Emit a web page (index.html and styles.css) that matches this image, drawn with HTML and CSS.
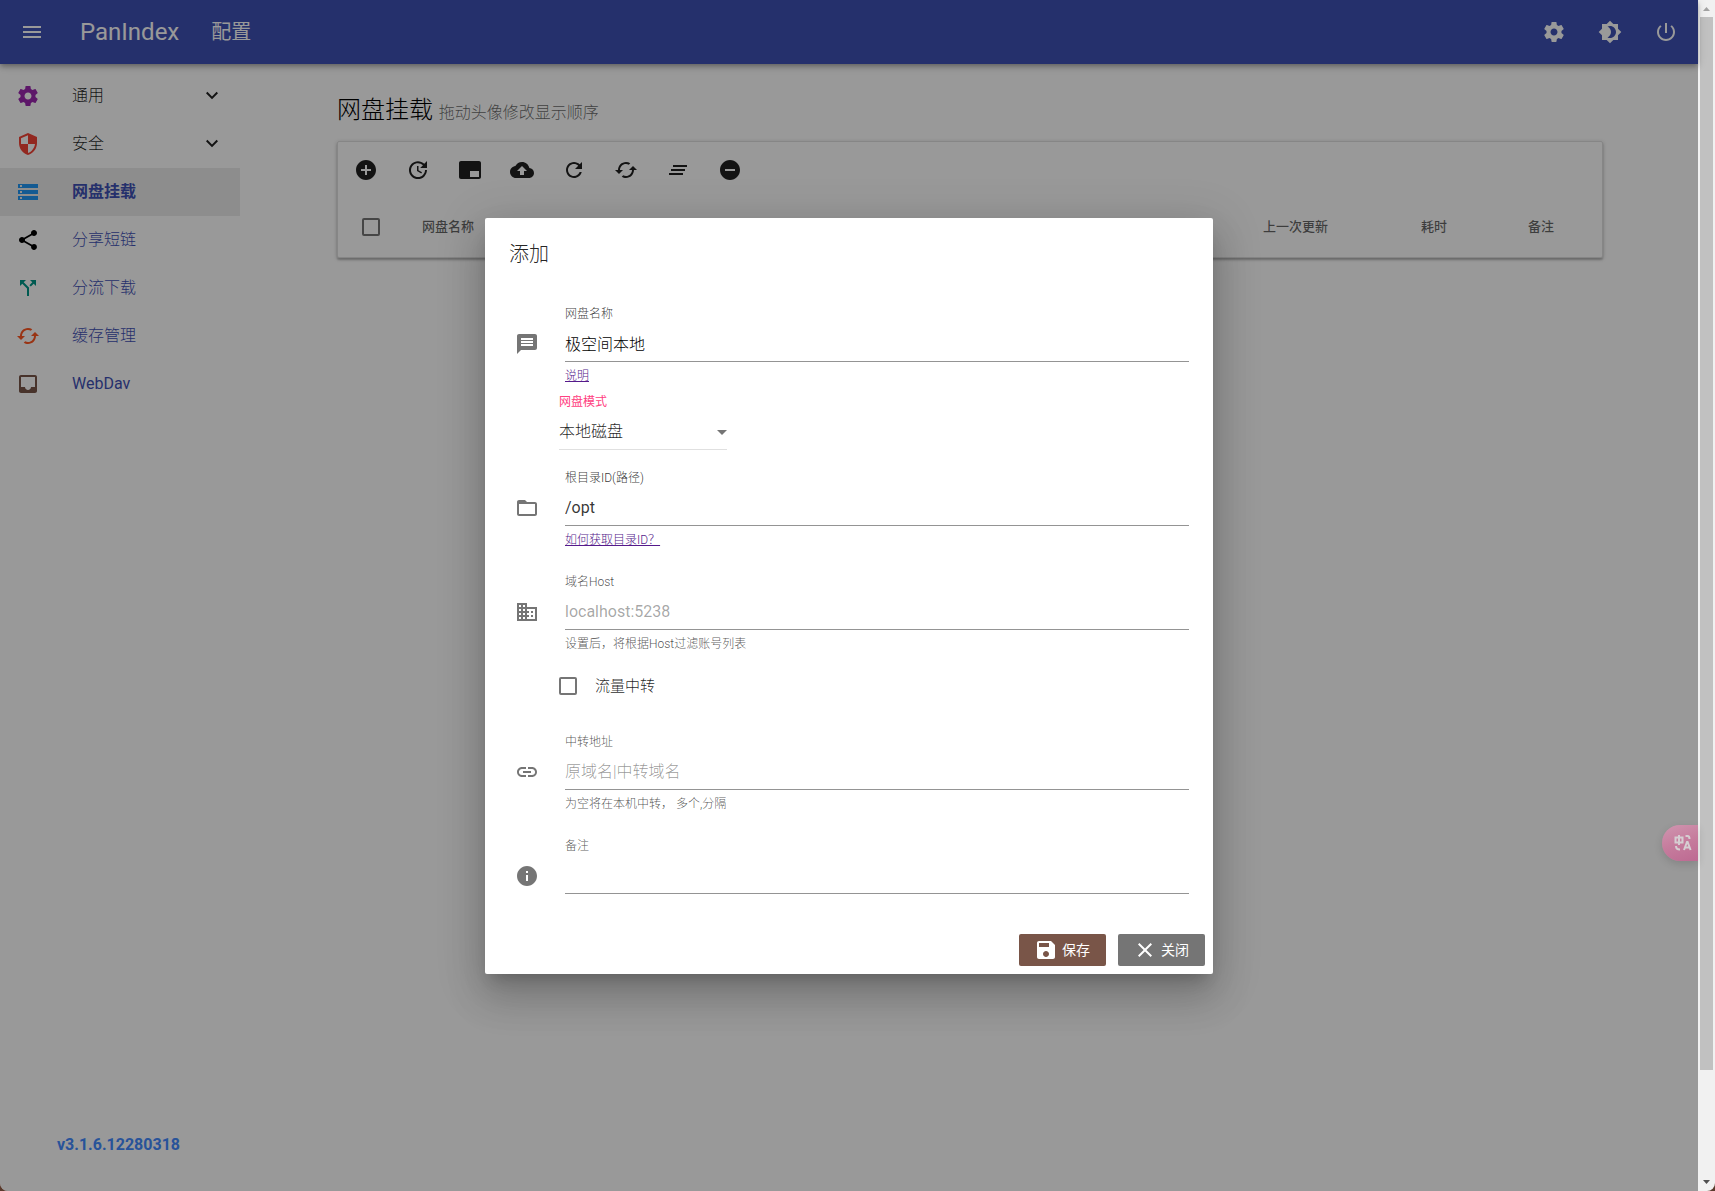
FILE: index.html
```html
<!DOCTYPE html>
<html lang="zh-CN">
<head>
<meta charset="utf-8">
<meta name="viewport" content="width=device-width, initial-scale=1">
<title>PanIndex 配置</title>
<link rel="stylesheet" href="styles.css">
</head>
<body>
<svg class="sprite" aria-hidden="true">
  <symbol id="i-menu" viewBox="0 0 24 24"><path d="M3 18h18v-2H3v2zm0-5h18v-2H3v2zm0-7v2h18V6H3z"/></symbol>
  <symbol id="i-settings" viewBox="0 0 24 24"><path d="M19.43 12.98c.04-.32.07-.64.07-.98s-.03-.66-.07-.98l2.11-1.65c.19-.15.24-.42.12-.64l-2-3.46c-.12-.22-.39-.3-.61-.22l-2.49 1c-.52-.4-1.08-.73-1.69-.98l-.38-2.65C14.46 2.18 14.25 2 14 2h-4c-.25 0-.46.18-.49.42l-.38 2.65c-.61.25-1.17.59-1.69.98l-2.49-1c-.23-.09-.49 0-.61.22l-2 3.46c-.13.22-.07.49.12.64l2.11 1.65c-.04.32-.07.65-.07.98s.03.66.07.98l-2.11 1.65c-.19.15-.24.42-.12.64l2 3.46c.12.22.39.3.61.22l2.49-1c.52.4 1.08.73 1.69.98l.38 2.65c.03.24.24.42.49.42h4c.25 0 .46-.18.49-.42l.38-2.65c.61-.25 1.17-.59 1.69-.98l2.49 1c.23.09.49 0 .61-.22l2-3.46c.12-.22.07-.49-.12-.64l-2.11-1.65zM12 15.5c-1.93 0-3.5-1.57-3.5-3.5s1.57-3.5 3.5-3.5 3.5 1.57 3.5 3.5-1.57 3.5-3.5 3.5z"/></symbol>
  <symbol id="i-brightness" viewBox="0 0 24 24"><path d="M20 8.69V4h-4.69L12 .69 8.69 4H4v4.69L.69 12 4 15.31V20h4.69L12 23.31 15.31 20H20v-4.69L23.31 12 20 8.69zM12 18c-.89 0-1.74-.2-2.5-.55C11.56 16.5 13 14.42 13 12s-1.44-4.5-3.5-5.45C10.26 6.2 11.11 6 12 6c3.31 0 6 2.69 6 6s-2.69 6-6 6z"/></symbol>
  <symbol id="i-power" viewBox="0 0 24 24"><path d="M13 3h-2v10h2V3zm4.83 2.17l-1.42 1.42C17.99 7.86 19 9.81 19 12c0 3.87-3.13 7-7 7s-7-3.13-7-7c0-2.19 1.01-4.14 2.58-5.42L6.17 5.17C4.23 6.82 3 9.26 3 12c0 4.97 4.03 9 9 9s9-4.03 9-9c0-2.74-1.23-5.18-3.17-6.83z"/></symbol>
  <symbol id="i-security" viewBox="0 0 24 24"><path d="M12 1L3 5v6c0 5.55 3.84 10.74 9 12 5.16-1.26 9-6.45 9-12V5l-9-4zm0 10.99h7c-.53 4.12-3.28 7.79-7 8.94V12H5V6.3l7-3.11v8.8z"/></symbol>
  <symbol id="i-storage" viewBox="0 0 24 24"><path d="M2 20h20v-4H2v4zm2-3h2v2H4v-2zM2 4v4h20V4H2zm4 3H4V5h2v2zm-4 7h20v-4H2v4zm2-3h2v2H4v-2z"/></symbol>
  <symbol id="i-share" viewBox="0 0 24 24"><path d="M18 16.08c-.76 0-1.44.3-1.96.77L8.91 12.7c.05-.23.09-.46.09-.7s-.04-.47-.09-.7l7.05-4.11c.54.5 1.25.81 2.04.81 1.66 0 3-1.34 3-3s-1.34-3-3-3-3 1.34-3 3c0 .24.04.47.09.7L8.04 9.81C7.5 9.31 6.79 9 6 9c-1.66 0-3 1.34-3 3s1.34 3 3 3c.79 0 1.5-.31 2.04-.81l7.12 4.16c-.05.21-.08.43-.08.65 0 1.61 1.31 2.92 2.92 2.92 1.61 0 2.92-1.31 2.92-2.92s-1.31-2.92-2.92-2.92z"/></symbol>
  <symbol id="i-split" viewBox="0 0 24 24"><path d="M14 4l2.29 2.29-2.88 2.88 1.42 1.42 2.88-2.88L20 10V4zm-4 0H4v6l2.29-2.29 4.71 4.7V20h2v-8.41l-5.29-5.3z"/></symbol>
  <symbol id="i-cached" viewBox="0 0 24 24"><path d="M19 8l-4 4h3c0 3.31-2.69 6-6 6-1.01 0-1.97-.25-2.8-.7l-1.46 1.46C8.97 19.54 10.43 20 12 20c4.42 0 8-3.58 8-8h3l-4-4zM6 12c0-3.31 2.69-6 6-6 1.01 0 1.97.25 2.8.7l1.46-1.46C15.03 4.46 13.57 4 12 4c-4.42 0-8 3.58-8 8H1l4 4 4-4H6z"/></symbol>
  <symbol id="i-inbox" viewBox="0 0 24 24"><path d="M19 3H4.99c-1.11 0-1.98.89-1.98 2L3 19c0 1.1.88 2 1.99 2H19c1.1 0 2-.9 2-2V5c0-1.11-.9-2-2-2zm0 12h-4c0 1.66-1.35 3-3 3s-3-1.34-3-3H4.99V5H19v10z"/></symbol>
  <symbol id="i-expand" viewBox="0 0 24 24"><path d="M7.41 7.84L12 12.42l4.59-4.58L18 9.25l-6 6-6-6z"/></symbol>
  <symbol id="i-add" viewBox="0 0 24 24"><path d="M12 2C6.48 2 2 6.48 2 12s4.48 10 10 10 10-4.48 10-10S17.52 2 12 2zm5 11h-4v4h-2v-4H7v-2h4V7h2v4h4v2z"/></symbol>
  <symbol id="i-remove" viewBox="0 0 24 24"><path d="M12 2C6.48 2 2 6.48 2 12s4.48 10 10 10 10-4.48 10-10S17.52 2 12 2zm5 11H7v-2h10v2z"/></symbol>
  <symbol id="i-update" viewBox="0 0 24 24"><path d="M21 10.12h-6.78l2.74-2.82c-2.73-2.7-7.15-2.8-9.88-.1-2.73 2.71-2.73 7.08 0 9.79s7.15 2.71 9.88 0C18.32 15.65 19 14.08 19 12.1h2c0 1.98-.88 4.55-2.64 6.29-3.51 3.48-9.21 3.48-12.72 0-3.5-3.47-3.53-9.11-.02-12.58s9.14-3.47 12.65 0L21 3v7.12zM12.5 8v4.25l3.5 2.08-.72 1.21L11 13V8h1.5z"/></symbol>
  <symbol id="i-watermark" viewBox="0 0 24 24"><path d="M21 3H3c-1.1 0-2 .9-2 2v14c0 1.1.9 2 2 2h18c1.1 0 2-.9 2-2V5c0-1.1-.9-2-2-2zm0 16h-9v-6h9v6z"/></symbol>
  <symbol id="i-upload" viewBox="0 0 24 24"><path d="M19.35 10.04C18.67 6.59 15.64 4 12 4 9.11 4 6.6 5.64 5.35 8.04 2.34 8.36 0 10.91 0 14c0 3.31 2.69 6 6 6h13c2.76 0 5-2.24 5-5 0-2.64-2.05-4.78-4.65-4.96zM14 13v4h-4v-4H7l5-5 5 5h-3z"/></symbol>
  <symbol id="i-refresh" viewBox="0 0 24 24"><path d="M17.65 6.35C16.2 4.9 14.21 4 12 4c-4.42 0-7.99 3.58-7.99 8s3.57 8 7.99 8c3.73 0 6.84-2.55 7.73-6h-2.08c-.82 2.33-3.04 4-5.65 4-3.31 0-6-2.69-6-6s2.69-6 6-6c1.66 0 3.14.69 4.22 1.78L13 11h7V4l-2.35 2.35z"/></symbol>
  <symbol id="i-clear" viewBox="0 0 24 24"><path d="M5 13h14v-2H5v2zm-2 4h14v-2H3v2zM7 7v2h14V7H7z"/></symbol>
  <symbol id="i-message" viewBox="0 0 24 24"><path d="M20 2H4c-1.1 0-1.99.9-1.99 2L2 22l4-4h14c1.1 0 2-.9 2-2V4c0-1.1-.9-2-2-2zm-2 12H6v-2h12v2zm0-3H6V9h12v2zm0-3H6V6h12v2z"/></symbol>
  <symbol id="i-folder" viewBox="0 0 24 24"><path d="M20 6h-8l-2-2H4c-1.1 0-1.99.9-1.99 2L2 18c0 1.1.9 2 2 2h16c1.1 0 2-.9 2-2V8c0-1.1-.9-2-2-2zm0 12H4V8h16v10z"/></symbol>
  <symbol id="i-domain" viewBox="0 0 24 24"><path d="M12 7V3H2v18h20V7H12zM6 19H4v-2h2v2zm0-4H4v-2h2v2zm0-4H4V9h2v2zm0-4H4V5h2v2zm4 12H8v-2h2v2zm0-4H8v-2h2v2zm0-4H8V9h2v2zm0-4H8V5h2v2zm10 12h-8v-2h2v-2h-2v-2h2v-2h-2V9h8v10zm-2-8h-2v2h2v-2zm0 4h-2v2h2v-2z"/></symbol>
  <symbol id="i-link" viewBox="0 0 24 24"><path d="M3.9 12c0-1.71 1.39-3.1 3.1-3.1h4V7H7c-2.76 0-5 2.24-5 5s2.24 5 5 5h4v-1.9H7c-1.71 0-3.1-1.39-3.1-3.1zM8 13h8v-2H8v2zm9-6h-4v1.9h4c1.71 0 3.1 1.39 3.1 3.1s-1.39 3.1-3.1 3.1h-4V17h4c2.76 0 5-2.24 5-5s-2.24-5-5-5z"/></symbol>
  <symbol id="i-info" viewBox="0 0 24 24"><path d="M12 2C6.48 2 2 6.48 2 12s4.48 10 10 10 10-4.48 10-10S17.52 2 12 2zm1 15h-2v-6h2v6zm0-8h-2V7h2v2z"/></symbol>
  <symbol id="i-save" viewBox="0 0 24 24"><path d="M17 3H5c-1.11 0-2 .9-2 2v14c0 1.1.89 2 2 2h14c1.1 0 2-.9 2-2V7l-4-4zm-5 16c-1.66 0-3-1.34-3-3s1.34-3 3-3 3 1.34 3 3-1.34 3-3 3zm3-10H5V5h10v4z"/></symbol>
  <symbol id="i-close" viewBox="0 0 24 24"><path d="M19 6.41L17.59 5 12 10.59 6.41 5 5 6.41 10.59 12 5 17.59 6.41 19 12 13.41 17.59 19 19 17.59 13.41 12z"/></symbol>
  <symbol id="i-drop" viewBox="0 0 24 24"><path d="M7 10l5 5 5-5z"/></symbol>
</svg>

<div class="window">
  <div class="page">
    <header class="appbar">
      <button class="icon-btn" type="button" aria-label="菜单"><svg class="icon"><use href="#i-menu"/></svg></button>
      <a class="brand" href="#">PanIndex</a>
      <a class="section" href="#">配置</a>
      <div class="appbar-actions">
        <button class="icon-btn" type="button" aria-label="设置"><svg class="icon"><use href="#i-settings"/></svg></button>
        <button class="icon-btn" type="button" aria-label="主题"><svg class="icon"><use href="#i-brightness"/></svg></button>
        <button class="icon-btn" type="button" aria-label="退出"><svg class="icon"><use href="#i-power"/></svg></button>
      </div>
    </header>

    <div class="body">
      <nav class="drawer">
        <button class="nav-item nav-group" type="button"><svg class="icon purple"><use href="#i-settings"/></svg><span class="nav-text">通用</span><svg class="icon"><use href="#i-expand"/></svg></button>
        <button class="nav-item nav-group" type="button"><svg class="icon red"><use href="#i-security"/></svg><span class="nav-text">安全</span><svg class="icon"><use href="#i-expand"/></svg></button>
        <a class="nav-item active" href="#"><svg class="icon blue"><use href="#i-storage"/></svg><span class="nav-text">网盘挂载</span></a>
        <a class="nav-item" href="#"><svg class="icon black"><use href="#i-share"/></svg><span class="nav-text">分享短链</span></a>
        <a class="nav-item" href="#"><svg class="icon teal"><use href="#i-split"/></svg><span class="nav-text">分流下载</span></a>
        <a class="nav-item" href="#"><svg class="icon orange"><use href="#i-cached"/></svg><span class="nav-text">缓存管理</span></a>
        <a class="nav-item latin" href="#"><svg class="icon brown"><use href="#i-inbox"/></svg><span class="nav-text">WebDav</span></a>
        <a class="version" href="#">v3.1.6.12280318</a>
      </nav>

      <main class="content">
        <h1 class="heading">网盘挂载 <small class="hint">拖动头像修改显示顺序</small></h1>
        <section class="card">
          <div class="toolbar">
            <button class="tool" type="button" aria-label="添加"><svg class="icon"><use href="#i-add"/></svg></button>
            <button class="tool" type="button" aria-label="更新"><svg class="icon"><use href="#i-update"/></svg></button>
            <button class="tool" type="button" aria-label="标记"><svg class="icon"><use href="#i-watermark"/></svg></button>
            <button class="tool" type="button" aria-label="上传"><svg class="icon"><use href="#i-upload"/></svg></button>
            <button class="tool" type="button" aria-label="刷新"><svg class="icon"><use href="#i-refresh"/></svg></button>
            <button class="tool" type="button" aria-label="缓存"><svg class="icon"><use href="#i-cached"/></svg></button>
            <button class="tool" type="button" aria-label="清空"><svg class="icon"><use href="#i-clear"/></svg></button>
            <button class="tool" type="button" aria-label="删除"><svg class="icon"><use href="#i-remove"/></svg></button>
          </div>
          <table class="drives">
            <thead>
              <tr>
                <th class="col-check"><input class="check" type="checkbox" aria-label="全选"></th>
                <th>网盘名称</th>
                <th class="col-updated">上一次更新</th>
                <th class="col-cost">耗时</th>
                <th class="col-note">备注</th>
              </tr>
            </thead>
          </table>
        </section>
      </main>
    </div>

    <div class="overlay">
      <form class="dialog" role="dialog" aria-labelledby="dialog-title">
        <h2 class="dialog-title" id="dialog-title">添加</h2>
        <div class="dialog-content">
          <div class="field">
            <label class="label strong" for="name">网盘名称</label>
            <svg class="icon field-icon"><use href="#i-message"/></svg>
            <input class="input" id="name" type="text" value="极空间本地">
            <div class="helper"><a class="help-link" href="#">说明</a></div>
          </div>
          <div class="mode">
            <label class="mode-label" for="mode">网盘模式</label>
            <div class="select-box">
              <select class="select" id="mode"><option>本地磁盘</option></select>
              <svg class="icon select-arrow"><use href="#i-drop"/></svg>
            </div>
          </div>
          <div class="field">
            <label class="label strong" for="root">根目录ID(路径)</label>
            <svg class="icon field-icon"><use href="#i-folder"/></svg>
            <input class="input latin" id="root" type="text" value="/opt">
            <div class="helper"><a class="help-link" href="#">如何获取目录ID？</a></div>
          </div>
          <div class="field">
            <label class="label" for="host">域名Host</label>
            <svg class="icon field-icon"><use href="#i-domain"/></svg>
            <input class="input latin" id="host" type="text" placeholder="localhost:5238">
            <div class="helper">设置后，将根据Host过滤账号列表</div>
          </div>
          <label class="relay"><input class="check" type="checkbox">流量中转</label>
          <div class="field">
            <label class="label" for="relay">中转地址</label>
            <svg class="icon field-icon"><use href="#i-link"/></svg>
            <input class="input" id="relay" type="text" placeholder="原域名|中转域名">
            <div class="helper">为空将在本机中转， 多个,分隔</div>
          </div>
          <div class="field">
            <label class="label" for="note">备注</label>
            <svg class="icon field-icon"><use href="#i-info"/></svg>
            <input class="input" id="note" type="text">
          </div>
        </div>
        <div class="dialog-actions">
          <button class="btn btn-save" type="button"><svg class="icon"><use href="#i-save"/></svg>保存</button>
          <button class="btn btn-close" type="button"><svg class="icon"><use href="#i-close"/></svg>关闭</button>
        </div>
      </form>
    </div>

    <button class="translate" type="button" aria-label="翻译">
      <svg class="translate-icon" viewBox="0 0 18 18">
        <path d="M1.500 3.500h7v5h-7zM5 1v10M11.500 2h2q2 0 2 3M2 12q0 3.500 4 3.500M10 16l3-8h.6l3 8M11 13.500h4.500"/>
      </svg>
    </button>
  </div>

  <div class="scrollbar" aria-hidden="true">
    <svg class="scroll-arrow dim" viewBox="0 0 17 17"><path d="M5 11h7L8.500 7z"/></svg>
    <div class="scroll-track"><div class="scroll-thumb"></div></div>
    <svg class="scroll-arrow" viewBox="0 0 17 17"><path d="M5 6h7l-3.500 4z"/></svg>
  </div>
</div>
</body>
</html>
```
FILE: styles.css
```css
*, *::before, *::after { box-sizing: border-box; }

html { background: #5a3a2c; }

body {
  margin: 0;
  font-family: Roboto, "Noto Sans CJK SC", sans-serif;
  font-size: 16px;
  font-weight: 300;
  line-height: 24px;
  color: rgba(0, 0, 0, .87);
}

button, input, select { font: inherit; color: inherit; }
button { border: 0; padding: 0; background: none; cursor: pointer; }
a { text-decoration: none; color: inherit; }

.sprite { display: none; }
.icon { width: 24px; height: 24px; flex: none; fill: currentColor; }

.window {
  display: grid;
  grid-template-columns: 1fr 17px;
  min-height: 100vh;
  border-radius: 0 0 8px 8px;
  overflow: hidden;
}

.page {
  position: relative;
  display: flex;
  flex-direction: column;
  min-width: 0;
  background: #fff;
}

/* App bar */
.appbar {
  display: flex;
  align-items: center;
  height: 64px;
  padding: 0 8px;
  background: #3f51b5;
  color: #fff;
  font-weight: 400;
  box-shadow: 0 2px 4px -1px rgba(0, 0, 0, .2), 0 4px 5px rgba(0, 0, 0, .14), 0 1px 10px rgba(0, 0, 0, .12);
}
.icon-btn {
  display: grid;
  place-items: center;
  width: 48px;
  height: 48px;
}
.brand { margin-left: 24px; font-size: 24px; }
.section { margin-left: 32px; font-size: 20px; }
.appbar-actions { display: flex; gap: 8px; margin-left: auto; }

/* Drawer */
.body { display: flex; flex: 1; }
.drawer {
  display: flex;
  flex-direction: column;
  width: 240px;
  padding: 8px 0 28px;
}
.nav-item {
  display: flex;
  align-items: center;
  gap: 32px;
  height: 48px;
  padding: 0 16px;
  color: #3f51b5;
  text-align: left;
}
.nav-group { color: rgba(0, 0, 0, .87); }
.nav-text { flex: 1; }
.active { background: rgba(0, 0, 0, .08); font-weight: 700; }
.latin, .latin::placeholder { font-weight: 400; }
.purple { color: #9c27b0; }
.red { color: #f44336; }
.blue { color: #2196f3; }
.black { color: #000; }
.teal { color: #009688; }
.orange { color: #ff5722; }
.brown { color: #795548; }
.version {
  margin: auto 0 0 57px;
  line-height: 36px;
  color: #448aff;
  font-weight: 700;
}

/* Content */
.content { flex: 1; min-width: 0; padding: 28px 95px 28px 97px; }
.heading { margin: 0 0 13px; font-size: 24px; font-weight: 300; line-height: 36px; color: #000; }
.hint { font-size: 16px; line-height: 16px; color: rgba(0, 0, 0, .6); }
.card {
  border: 1px solid rgba(0, 0, 0, .12);
  border-radius: 2px;
  box-shadow: 0 2px 2px rgba(0, 0, 0, .2), 0 1px 4px rgba(0, 0, 0, .2);
}
.toolbar { display: flex; gap: 16px; padding: 10px 10px 8px; }
.tool { display: grid; place-items: center; width: 36px; height: 36px; }

.drives {
  width: 100%;
  border-collapse: collapse;
  table-layout: fixed;
  font-size: 13px;
  color: rgba(0, 0, 0, .6);
}
.drives th { height: 61px; padding: 0 28px; font-weight: 500; text-align: left; }
.drives .col-check { width: 56px; padding: 0 0 0 24px; }
.drives .col-updated { width: 158px; }
.drives .col-cost { width: 107px; }
.drives .col-note { width: 102px; }

.check {
  display: block;
  appearance: none;
  width: 18px;
  height: 18px;
  margin: 0;
  border: 2px solid rgba(0, 0, 0, .54);
  border-radius: 2px;
}
.check:checked { background: #3f51b5; }

/* Dialog */
.overlay {
  position: absolute;
  inset: 0;
  display: flex;
  align-items: center;
  justify-content: center;
  background: rgba(0, 0, 0, .4);
}
.dialog {
  width: 92%;
  max-width: 728px;
  border-radius: 2px;
  background: #fff;
  box-shadow: 0 11px 15px -7px rgba(0, 0, 0, .2), 0 24px 38px 3px rgba(0, 0, 0, .14), 0 9px 46px 8px rgba(0, 0, 0, .12);
}
.dialog-title {
  margin: 0;
  padding: 23px 24px 21px;
  font-size: 20px;
  font-weight: 300;
  line-height: 26px;
}
.dialog-content { padding: 0 24px 24px; }

.field {
  display: grid;
  grid-template-columns: 56px 1fr;
  grid-template-areas: ". label" "icon input" ". helper";
  align-items: center;
  padding: 17px 0 7px;
}
.field:last-child { padding-bottom: 8px; }
.label, .helper, .mode-label { font-size: 12px; line-height: 18px; }
.label { grid-area: label; margin-bottom: 3px; color: rgba(0, 0, 0, .7); }
.strong { color: rgba(0, 0, 0, .8); }
.field-icon { grid-area: icon; margin-left: 6px; color: rgba(0, 0, 0, .54); }
.input {
  grid-area: input;
  width: 100%;
  height: 36px;
  padding: 0;
  border: 0;
  border-bottom: 1px solid rgba(0, 0, 0, .42);
  border-radius: 0;
  outline: 0;
  background: none;
  color: #000;
}
.input.latin { color: rgba(0, 0, 0, .8); }
.input::placeholder { color: rgba(0, 0, 0, .42); }
.input.latin::placeholder { color: rgba(0, 0, 0, .36); }
.helper { grid-area: helper; margin-top: 5px; color: rgba(0, 0, 0, .7); }
.help-link { color: #551a8b; text-decoration: underline; }

.mode { display: grid; gap: 3px; padding: 1px 0 2px 50px; }
.mode-label { color: #ff4081; font-weight: 400; }
.select-box { display: grid; width: 168px; align-items: center; }
.select {
  grid-area: 1 / 1;
  appearance: none;
  width: 100%;
  height: 36px;
  padding: 1px 24px 0 0;
  border: 0;
  border-bottom: 1px solid rgba(0, 0, 0, .12);
  border-radius: 0;
  background: none;
}
.select-arrow {
  grid-area: 1 / 1;
  justify-self: end;
  margin-right: -7px;
  color: rgba(0, 0, 0, .54);
  pointer-events: none;
}

.relay {
  display: flex;
  align-items: center;
  gap: 18px;
  height: 36px;
  margin: 8px 0 12px 50px;
  font-size: 15px;
}

.dialog-actions { display: flex; justify-content: flex-end; gap: 12px; padding: 8px; }
.btn {
  display: flex;
  align-items: center;
  gap: 4px;
  height: 32px;
  padding: 0 16px 0 15px;
  border-radius: 2px;
  color: #fff;
  font-size: 14px;
  font-weight: 400;
}
.btn-save { background: #795548; }
.btn-close { background: #757575; }

/* Translate tab pinned to the right edge */
.translate {
  position: absolute;
  top: 825px;
  right: 0;
  display: grid;
  place-items: center;
  width: 36px;
  height: 36px;
  border-radius: 18px 0 0 18px;
  background: linear-gradient(160deg, #d096b0, #c67c9d 50%, #bd6a92);
  box-shadow: 0 3px 8px rgba(0, 0, 0, .14);
}
.translate-icon { width: 18px; height: 18px; margin-left: 5px; fill: none; stroke: #d6ced2; stroke-width: 2; }

/* Scroll bar column */
.scrollbar { display: flex; flex-direction: column; background: #f1f1f1; }
.scroll-arrow { width: 17px; height: 17px; fill: #505050; }
.dim { fill: #a3a3a3; }
.scroll-track { flex: 1; padding: 0 2px; }
.scroll-thumb { height: 91%; background: #c1c1c1; }
```
